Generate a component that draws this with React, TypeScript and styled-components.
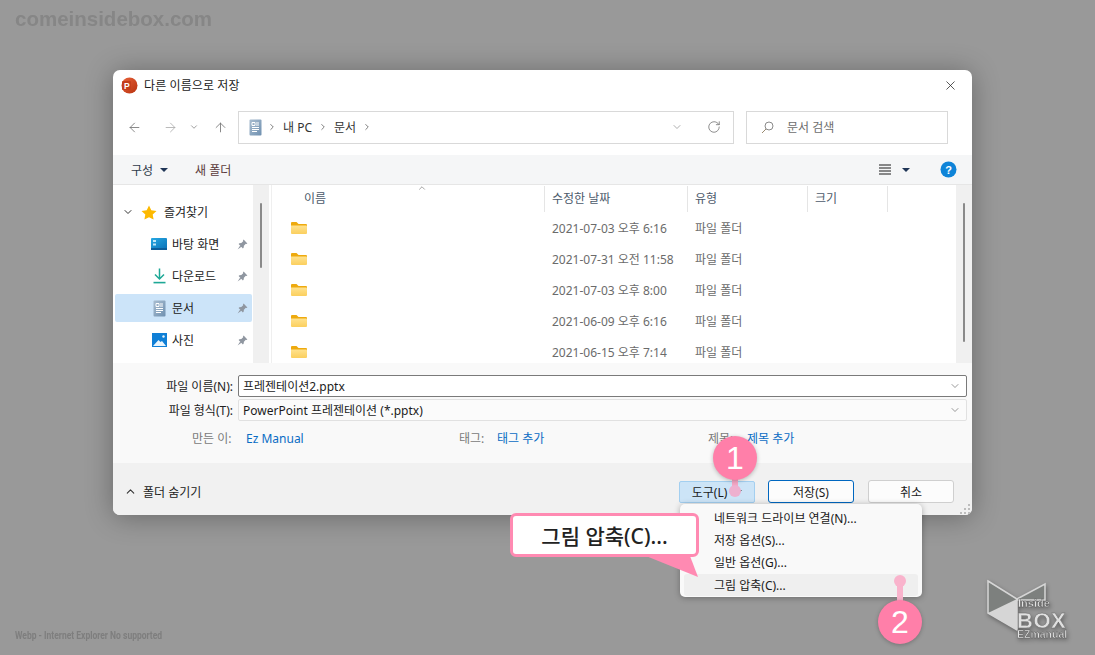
import styled, { createGlobalStyle } from "styled-components";
import { ChevronDown, ChevronUp, ChevronRight, ArrowLeft, ArrowRight, ArrowUp, RotateCw, X } from "lucide-react";

const GlobalStyle = createGlobalStyle`
	html, body {
		margin: 0;
		padding: 0;
		background: #999;
	}
	* {
		box-sizing: border-box;
	}
`;

const Page = styled.div`
	position: relative;
	width: 1095px;
	height: 655px;
	overflow: hidden;
	padding: 70px 0 0 113px;
	background: #999;
	font-family: "Noto Sans", "Noto Sans CJK KR", sans-serif;
	font-size: 12px;
	color: #222;
`;

const Watermark = styled.div`
	position: absolute;
	left: 15px;
	top: 7px;
	font-family: "Liberation Sans", sans-serif;
	font-weight: 700;
	font-size: 20.5px;
	color: #868686;
	filter: blur(0.5px);
`;

const Notice = styled.div`
	position: absolute;
	left: 15px;
	top: 628px;
	font-family: "Roboto", sans-serif;
	font-weight: 700;
	font-size: 11.5px;
	color: #7e7e7e;
	white-space: nowrap;
	transform: scaleX(0.74);
	transform-origin: left center;
	filter: blur(0.4px);
`;

const Dialog = styled.div`
	position: relative;
	width: 859px;
	height: 445px;
	display: flex;
	flex-direction: column;
	background: #fff;
	border-radius: 7px;
	overflow: hidden;
`;

const DialogShadow = styled.div`
	width: 859px;
	height: 445px;
	border-radius: 7px;
	box-shadow: 0 2px 28px rgba(0, 0, 0, 0.32);
`;

const TitleBar = styled.div`
	height: 30px;
	flex: none;
	display: flex;
	align-items: center;
	padding: 0 14px 0 8px;
	gap: 6px;
`;

const TitleText = styled.span`
	flex: 1;
	font-size: 12px;
	color: #1a1a1a;
	letter-spacing: 0.1px;
`;

const NavRow = styled.div`
	height: 55px;
	flex: none;
	display: flex;
	align-items: center;
	padding: 0 12px 1px 13px;
`;

const NavButton = styled.span<{ $w: number; $c?: string }>`
	width: ${(p) => p.$w}px;
	display: flex;
	justify-content: center;
	color: ${(p) => p.$c ?? "#6f6f6f"};
`;

const AddressBox = styled.div`
	width: 496px;
	height: 33px;
	margin-left: 8px;
	display: flex;
	align-items: center;
	border: 1px solid #d9d9d9;
	padding: 0 12px 0 10px;
	color: #2b2b2b;
`;

const Crumb = styled.span`
	margin: 0 6px;
	color: #333;
`;

const CrumbSep = styled.span`
	display: flex;
	width: 10px;
	justify-content: center;
	color: #666;
`;

const AddressTools = styled.div`
	margin-left: auto;
	display: flex;
	align-items: center;
	gap: 24px;
	color: #777;
`;

const SearchBox = styled.div`
	width: 202px;
	height: 33px;
	margin-left: 12px;
	display: flex;
	align-items: center;
	gap: 13px;
	border: 1px solid #d9d9d9;
	padding-left: 14px;
	color: #6d6d6d;
`;

const Toolbar = styled.div`
	height: 30px;
	flex: none;
	display: flex;
	align-items: center;
	padding: 0 15px 0 18px;
	background: #f5f6f7;
	border-bottom: 1px solid #e6e6e6;
`;

const ToolLabel = styled.span<{ $c?: string }>`
	color: ${(p) => p.$c ?? "#2f3a4a"};
`;

const Caret = styled.span<{ $c?: string }>`
	display: inline-block;
	width: 0;
	height: 0;
	border-left: 4px solid transparent;
	border-right: 4px solid transparent;
	border-top: 4px solid ${(p) => p.$c ?? "#1f3556"};
`;

const ToolGroup = styled.div<{ $gap: number; $ml?: string }>`
	display: flex;
	align-items: center;
	gap: ${(p) => p.$gap}px;
	margin-left: ${(p) => p.$ml ?? "0"};
`;

const Body = styled.div`
	height: 178px;
	flex: none;
	display: flex;
	overflow: hidden;
`;

const Sidebar = styled.div`
	width: 140px;
	flex: none;
	padding: 11px 0 0 2px;
	display: flex;
	flex-direction: column;
`;

const TreeHead = styled.div`
	height: 32px;
	display: flex;
	align-items: center;
	gap: 7px;
	padding-left: 7px;
	color: #222;
	margin-top: 0;
`;

const TreeRow = styled.div<{ $active?: boolean }>`
	height: 28px;
	margin: 2px 0;
	width: 137px;
	display: flex;
	align-items: center;
	padding: 0 4px 0 36px;
	gap: 5px;
	border-radius: 2px;
	background: ${(p) => (p.$active ? "#cce4f9" : "transparent")};
	color: #222;
`;

const TreeIcon = styled.span`
	width: 16px;
	height: 16px;
	display: flex;
	align-items: center;
	justify-content: center;
`;

const TreeLabel = styled.span`
	flex: 1;
`;

const ScrollTrack = styled.div<{ $left: number; $top: number; $height: number }>`
	width: 16px;
	flex: none;
	background: #f0f0f0;
	padding: ${(p) => p.$top}px 0 0 ${(p) => p.$left}px;
	&::before {
		content: "";
		display: block;
		width: 2px;
		height: ${(p) => p.$height}px;
		background: #8a8a8a;
		border-radius: 1px;
	}
`;

const ListPane = styled.div`
	flex: 1;
	margin-left: 2px;
	border-left: 1px solid #efefef;
	position: relative;
	min-width: 0;
`;

const listColumns = "273px 143px 120px 80px 1fr";

const ListHeader = styled.div`
	height: 26px;
	margin-top: 1px;
	display: grid;
	grid-template-columns: ${listColumns};
`;

const HeaderCell = styled.div<{ $pad?: number }>`
	display: flex;
	align-items: center;
	padding-left: ${(p) => p.$pad ?? 7}px;
	padding-bottom: 2px;
	border-right: 1px solid #e5e5e5;
	color: #4c5a6b;
	&:last-child {
		border-right: 0;
	}
`;

const SortCaret = styled.span`
	position: absolute;
	left: 145px;
	top: -2px;
	display: flex;
	color: #666;
`;

const FileRow = styled.div`
	height: 31px;
	display: grid;
	grid-template-columns: ${listColumns};
	align-items: center;
	color: #6b6b6b;
`;

const NameCell = styled.div`
	padding: 0 0 0 19px;
	display: flex;
`;

const DateCell = styled.div`
	padding-left: 7px;
	white-space: nowrap;
`;

const TypeCell = styled.div`
	padding-left: 7px;
`;

const FormArea = styled.div`
	height: 100px;
	flex: none;
	background: #f9f9f9;
	padding-top: 12px;
`;

const FieldRow = styled.div`
	display: flex;
	align-items: center;
	margin-bottom: 2px;
`;

const FieldLabel = styled.span`
	width: 120px;
	text-align: right;
	flex: none;
	color: #222;
`;

const FieldBox = styled.div<{ $strong?: boolean }>`
	width: 729px;
	height: 22px;
	margin-left: 5px;
	display: flex;
	align-items: center;
	justify-content: space-between;
	padding: 0 5px 0 4px;
	border-radius: 2px;
	border: 1px solid ${(p) => (p.$strong ? "#7a7a7a" : "#e1e1e1")};
	background: ${(p) => (p.$strong ? "#fff" : "#fbfbfb")};
	color: #1b1b1b;
`;

const MetaRow = styled.div`
	display: flex;
	align-items: center;
	margin-top: 7px;
	height: 20px;
	padding-left: 79px;
`;

const MetaLabel = styled.span<{ $w: number }>`
	width: ${(p) => p.$w}px;
	flex: none;
	color: #7a7a7a;
`;

const MetaValue = styled.span<{ $w: number }>`
	width: ${(p) => p.$w}px;
	flex: none;
	color: #0a6cc4;
`;

const Footer = styled.div`
	flex: 1;
	display: flex;
	align-items: center;
	background: #f1f1f1;
	padding: 5px 18px 0 11px;
`;

const HideToggle = styled.div`
	display: flex;
	align-items: center;
	gap: 6px;
	color: #222;
	margin-right: auto;
`;

const ToolsButton = styled.div`
	width: 76px;
	height: 22px;
	display: flex;
	align-items: center;
	justify-content: center;
	gap: 7px;
	background: #cce4f7;
	border: 1px solid #a3cff0;
	border-radius: 2px;
	color: #1a1a1a;
`;

const DialogButton = styled.div<{ $primary?: boolean; $ml: number }>`
	width: 86px;
	height: 23px;
	margin-left: ${(p) => p.$ml}px;
	display: flex;
	align-items: center;
	justify-content: center;
	background: #fcfcfc;
	border: 1px solid ${(p) => (p.$primary ? "#0067c0" : "#cfcfcf")};
	border-radius: 3px;
	color: #1a1a1a;
`;

const Grip = styled.svg`
	position: absolute;
	right: 1px;
	bottom: 1px;
`;

const Menu = styled.div`
	position: absolute;
	left: 680px;
	top: 504px;
	width: 242px;
	height: 93px;
	padding: 3px 4px;
	background: #f9f9f9;
	border-radius: 5px;
	box-shadow: 0 1px 6px rgba(0, 0, 0, 0.3);
	z-index: 2;
`;

const MenuItem = styled.div<{ $hover?: boolean }>`
	height: 22px;
	display: flex;
	align-items: center;
	padding-left: 30px;
	margin-top: ${(p) => (p.$hover ? "1px" : "0")};
	border-radius: 3px;
	background: ${(p) => (p.$hover ? "#efefef" : "transparent")};
	color: #1a1a1a;
`;

const Callout = styled.div`
	position: absolute;
	left: 510px;
	top: 513px;
	width: 189px;
	height: 44px;
	display: flex;
	align-items: center;
	justify-content: center;
	background: #fff;
	border: 3px solid #ff8ab2;
	border-radius: 6px;
	font-size: 21px;
	font-weight: 500;
	color: #222;
	z-index: 4;
`;

const CalloutTail = styled.svg`
	position: absolute;
	left: 640px;
	top: 553px;
	z-index: 5;
`;

const Marker = styled.svg`
	position: absolute;
	z-index: 3;
	overflow: visible;
	left: 0;
	top: 0;
`;

const Badge = styled.div<{ $x: number; $y: number }>`
	position: absolute;
	left: ${(p) => p.$x - 22}px;
	top: ${(p) => p.$y - 22}px;
	width: 44px;
	height: 44px;
	display: flex;
	align-items: center;
	justify-content: center;
	border-radius: 50%;
	background: #ff7fa9;
	box-shadow: 0 1px 4px rgba(0, 0, 0, 0.25);
	color: #fff;
	font-family: "Liberation Sans", sans-serif;
	font-size: 32px;
	z-index: 4;
`;

const Logo = styled.svg`
	position: absolute;
	left: 985px;
	top: 578px;
	filter: drop-shadow(1px 2px 2px rgba(0, 0, 0, 0.35));
`;

const PptIcon = () => (
	<svg width="17" height="17" viewBox="0 0 17 17">
		<defs>
			<linearGradient id="ppt" x1="0" y1="0" x2="1" y2="1">
				<stop offset="0" stopColor="#e8623a" />
				<stop offset="1" stopColor="#b8320f" />
			</linearGradient>
		</defs>
		<circle cx="8.5" cy="8.5" r="8" fill="url(#ppt)" />
		<rect x="1" y="4" width="9" height="9" rx="1" fill="#c43e1c" />
		<text x="3" y="11.5" fontSize="8.5" fontWeight="700" fill="#fff" fontFamily="Liberation Sans">
			P
		</text>
	</svg>
);

const DocIcon = () => (
	<svg width="13" height="17" viewBox="0 0 13 17">
		<defs>
			<linearGradient id="doc" x1="0" y1="0" x2="1" y2="1">
				<stop offset="0" stopColor="#a9bdd0" />
				<stop offset="1" stopColor="#6f90b0" />
			</linearGradient>
		</defs>
		<rect width="12" height="16" x="0.5" y="0.5" rx="1" fill="url(#doc)" />
		<path d="M3 3.5h3v3H3zM7 4h3M7 6h3M3 8.5h7M3 10.5h7M3 12.5h5" stroke="#fff" strokeWidth="1" fill="none" />
	</svg>
);

const FolderIcon = () => (
	<svg width="16" height="14" viewBox="0 0 16 14">
		<defs>
			<linearGradient id="folder" x1="0" y1="0" x2="0" y2="1">
				<stop offset="0" stopColor="#ffe28e" />
				<stop offset="1" stopColor="#fbcf5e" />
			</linearGradient>
		</defs>
		<path d="M0 2a1 1 0 0 1 1-1h4.5l2 2H15a1 1 0 0 1 1 1v3H0z" fill="#eeaa0e" />
		<path d="M0 4.5h15.2a.8.8 0 0 1 .8.8V12a1 1 0 0 1-1 1H1a1 1 0 0 1-1-1z" fill="url(#folder)" />
	</svg>
);

const StarIcon = () => (
	<svg width="16" height="15" viewBox="0 0 16 15">
		<path d="M8 0.5l2.3 4.7 5.2.7-3.8 3.6.9 5.1L8 12.2l-4.6 2.4.9-5.1L.5 5.9l5.2-.7z" fill="#fdb900" />
	</svg>
);

const PinIcon = () => (
	<svg width="11" height="11" viewBox="0 0 11 11">
		<path d="M6.6.6l3.8 3.8-1 .6-.6-.2L6.9 6.7l-.2 1.9-.8.8-4.3-4.3.8-.8 1.9-.2 1.9-1.9-.2-.6zM3.2 6.6L.6 10.4l3.8-2.6z" fill="#8f96a0" />
	</svg>
);

const DesktopIcon = () => (
	<svg width="16" height="12" viewBox="0 0 16 12">
		<defs>
			<linearGradient id="desk" x1="0" y1="0" x2="1" y2="1">
				<stop offset="0" stopColor="#27a9e3" />
				<stop offset="1" stopColor="#0a72b8" />
			</linearGradient>
		</defs>
		<rect width="16" height="11" rx="1" fill="url(#desk)" />
		<rect y="10" width="16" height="2" fill="#0c5d9a" />
		<rect x="2" y="2" width="3" height="2" fill="#bfe6f8" />
		<rect x="2" y="5.5" width="3" height="2" fill="#bfe6f8" />
	</svg>
);

const DownloadIcon = () => (
	<svg width="13" height="16" viewBox="0 0 13 16">
		<path d="M6.5 0.5v10M2 6.5l4.5 4.5L11 6.5" stroke="#1ea896" strokeWidth="1.5" fill="none" />
		<path d="M.5 14.6h12" stroke="#1ea896" strokeWidth="1.6" />
	</svg>
);

const PictureIcon = () => (
	<svg width="15" height="14" viewBox="0 0 15 14">
		<rect width="15" height="14" fill="#0f7fd6" />
		<path d="M1 13l5.5-6 2 2 1.5-1 4 5z" fill="#e9f5fd" />
		<circle cx="11.5" cy="3.5" r="1.2" fill="#e9f5fd" />
	</svg>
);

const SearchIcon = () => (
	<svg width="13" height="13" viewBox="0 0 13 13">
		<circle cx="8" cy="5" r="4" fill="none" stroke="#8a8a8a" />
		<path d="M5 8l-4 4" stroke="#9a8a70" />
	</svg>
);

const ViewIcon = () => (
	<svg width="12" height="11" viewBox="0 0 12 11">
		<path d="M0 1h12M0 4h12M0 7h12M0 10h12" stroke="#1a1a1a" />
	</svg>
);

const HelpIcon = () => (
	<svg width="17" height="17" viewBox="0 0 17 17">
		<circle cx="8.5" cy="8.5" r="8" fill="#0f84d8" />
		<text x="8.5" y="12.5" textAnchor="middle" fontSize="11" fontWeight="700" fill="#fff" fontFamily="Liberation Sans">
			?
		</text>
	</svg>
);

const files = [
	"2021-07-03 오후 6:16",
	"2021-07-31 오전 11:58",
	"2021-07-03 오후 8:00",
	"2021-06-09 오후 6:16",
	"2021-06-15 오후 7:14",
];

const places = [
	{ label: "바탕 화면", icon: <DesktopIcon /> },
	{ label: "다운로드", icon: <DownloadIcon /> },
	{ label: "문서", icon: <DocIcon />, active: true },
	{ label: "사진", icon: <PictureIcon /> },
];

const menuItems = ["네트워크 드라이브 연결(N)...", "저장 옵션(S)...", "일반 옵션(G)..."];

function App() {
	return (
		<Page>
			<GlobalStyle />
			<Watermark>comeinsidebox.com</Watermark>
			<Notice>Webp - Internet Explorer No supported</Notice>
			<DialogShadow>
				<Dialog>
					<TitleBar>
						<PptIcon />
						<TitleText>다른 이름으로 저장</TitleText>
						<X size={15} strokeWidth={1.2} color="#222" />
					</TitleBar>
					<NavRow>
						<NavButton $w={16}>
							<ArrowLeft size={15} strokeWidth={1.3} />
						</NavButton>
						<NavButton $w={20} />
						<NavButton $w={16} $c="#aaa">
							<ArrowRight size={15} strokeWidth={1.3} />
						</NavButton>
						<NavButton $w={32}>
							<ChevronDown size={10} strokeWidth={1.6} />
						</NavButton>
						<NavButton $w={20}>
							<ArrowUp size={15} strokeWidth={1.3} />
						</NavButton>
						<AddressBox>
							<DocIcon />
							<CrumbSep style={{ marginLeft: 5 }}>
								<ChevronRight size={10} strokeWidth={2} />
							</CrumbSep>
							<Crumb>내 PC</Crumb>
							<CrumbSep>
								<ChevronRight size={10} strokeWidth={2} />
							</CrumbSep>
							<Crumb>문서</Crumb>
							<CrumbSep>
								<ChevronRight size={10} strokeWidth={2} />
							</CrumbSep>
							<AddressTools>
								<ChevronDown size={12} strokeWidth={1.2} />
								<RotateCw size={14} strokeWidth={1.4} />
							</AddressTools>
						</AddressBox>
						<SearchBox>
							<SearchIcon />
							<span>문서 검색</span>
						</SearchBox>
					</NavRow>
					<Toolbar>
						<ToolGroup $gap={7}>
							<ToolLabel>구성</ToolLabel>
							<Caret />
						</ToolGroup>
						<ToolGroup $gap={0} $ml="27px">
							<ToolLabel $c="#5b3a3a">새 폴더</ToolLabel>
						</ToolGroup>
						<ToolGroup $gap={11} $ml="auto">
							<ViewIcon />
							<Caret />
						</ToolGroup>
						<ToolGroup $gap={0} $ml="30px">
							<HelpIcon />
						</ToolGroup>
					</Toolbar>
					<Body>
						<Sidebar>
							<TreeHead>
								<ChevronDown size={12} strokeWidth={2} color="#333" />
								<StarIcon />
								<span>즐겨찾기</span>
							</TreeHead>
							{places.map((place) => (
								<TreeRow key={place.label} $active={place.active}>
									<TreeIcon>{place.icon}</TreeIcon>
									<TreeLabel>{place.label}</TreeLabel>
									<PinIcon />
								</TreeRow>
							))}
						</Sidebar>
						<ScrollTrack $left={7} $top={18} $height={65} />
						<ListPane>
							<SortCaret>
								<ChevronUp size={10} strokeWidth={1.4} />
							</SortCaret>
							<ListHeader>
								<HeaderCell $pad={32}>이름</HeaderCell>
								<HeaderCell>수정한 날짜</HeaderCell>
								<HeaderCell>유형</HeaderCell>
								<HeaderCell>크기</HeaderCell>
								<div />
							</ListHeader>
							{files.map((date) => (
								<FileRow key={date}>
									<NameCell>
										<FolderIcon />
									</NameCell>
									<DateCell>{date}</DateCell>
									<TypeCell>파일 폴더</TypeCell>
								</FileRow>
							))}
						</ListPane>
						<ScrollTrack $left={7} $top={18} $height={139} />
					</Body>
					<FormArea>
						<FieldRow>
							<FieldLabel>파일 이름(N):</FieldLabel>
							<FieldBox $strong>
								<span>프레젠테이션2.pptx</span>
								<ChevronDown size={12} strokeWidth={1.2} color="#555" />
							</FieldBox>
						</FieldRow>
						<FieldRow>
							<FieldLabel>파일 형식(T):</FieldLabel>
							<FieldBox>
								<span>PowerPoint 프레젠테이션 (*.pptx)</span>
								<ChevronDown size={12} strokeWidth={1.2} color="#555" />
							</FieldBox>
						</FieldRow>
						<MetaRow>
							<MetaLabel $w={54}>만든 이:</MetaLabel>
							<MetaValue $w={213}>Ez Manual</MetaValue>
							<MetaLabel $w={38}>태그:</MetaLabel>
							<MetaValue $w={211}>태그 추가</MetaValue>
							<MetaLabel $w={39}>제목:</MetaLabel>
							<MetaValue $w={70}>제목 추가</MetaValue>
						</MetaRow>
					</FormArea>
					<Footer>
						<HideToggle>
							<ChevronUp size={13} strokeWidth={2} color="#333" />
							<span>폴더 숨기기</span>
						</HideToggle>
						<ToolsButton>
							<span>도구(L)</span>
							<Caret $c="#333" />
						</ToolsButton>
						<DialogButton $primary $ml={13}>
							저장(S)
						</DialogButton>
						<DialogButton $ml={14}>취소</DialogButton>
					</Footer>
					<Grip width="11" height="10" viewBox="0 0 11 10" fill="#bdbdbd">
						<rect x="8" y="0" width="2" height="2" />
						<rect x="4" y="4" width="2" height="2" />
						<rect x="8" y="4" width="2" height="2" />
						<rect x="0" y="8" width="2" height="2" />
						<rect x="4" y="8" width="2" height="2" />
						<rect x="8" y="8" width="2" height="2" />
					</Grip>
				</Dialog>
			</DialogShadow>

			<Menu>
				{menuItems.map((item) => (
					<MenuItem key={item}>{item}</MenuItem>
				))}
				<MenuItem $hover>그림 압축(C)...</MenuItem>
			</Menu>

			<Marker width="1095" height="655">
				<path d="M735 458V491" stroke="#f4a6c4" strokeWidth="6" />
				<circle cx="735" cy="491" r="6" fill="#eeb0cf" />
				<path d="M900 622V581" stroke="#f9b3cc" strokeWidth="6" />
				<circle cx="900" cy="581" r="6" fill="#f9b3cc" />
			</Marker>
			<Badge $x={735} $y={458}>1</Badge>
			<Badge $x={900} $y={622}>2</Badge>

			<Callout>그림 압축(C)...</Callout>
			<CalloutTail width="62" height="26" viewBox="0 0 62 26">
				<path d="M6 3L58 24 50 3z" fill="#ff8ab2" />
			</CalloutTail>

			<Logo width="92" height="62" viewBox="0 0 92 62">
				<path d="M3 3L35 22 68 3V38H35L3 17z" fill="none" />
				<path d="M3 3l29 18v31L3 35z" fill="#7d807e" stroke="#d6d6d6" strokeWidth="1.5" />
				<path d="M32 21L60 6v16H32z" fill="#7d807e" stroke="#d6d6d6" strokeWidth="1.5" />
				<path d="M3 35l29-14v31z" fill="#d6d6d6" />
				<text x="33" y="29" fontSize="11" fontWeight="700" fill="#e4e4e4" stroke="#555" strokeWidth="0.4" fontFamily="Liberation Sans">
					Inside
				</text>
				<text x="32" y="50" fontSize="22" fontWeight="700" fill="#e0e0e0" stroke="#666" strokeWidth="0.4" fontFamily="Liberation Sans" letterSpacing="0.5">
					BOX
				</text>
				<text x="32" y="60" fontSize="10.5" fontWeight="700" fill="#e4e4e4" stroke="#555" strokeWidth="0.4" fontFamily="Liberation Sans">
					EZmanual
				</text>
			</Logo>
		</Page>
	);
}

export default App;
